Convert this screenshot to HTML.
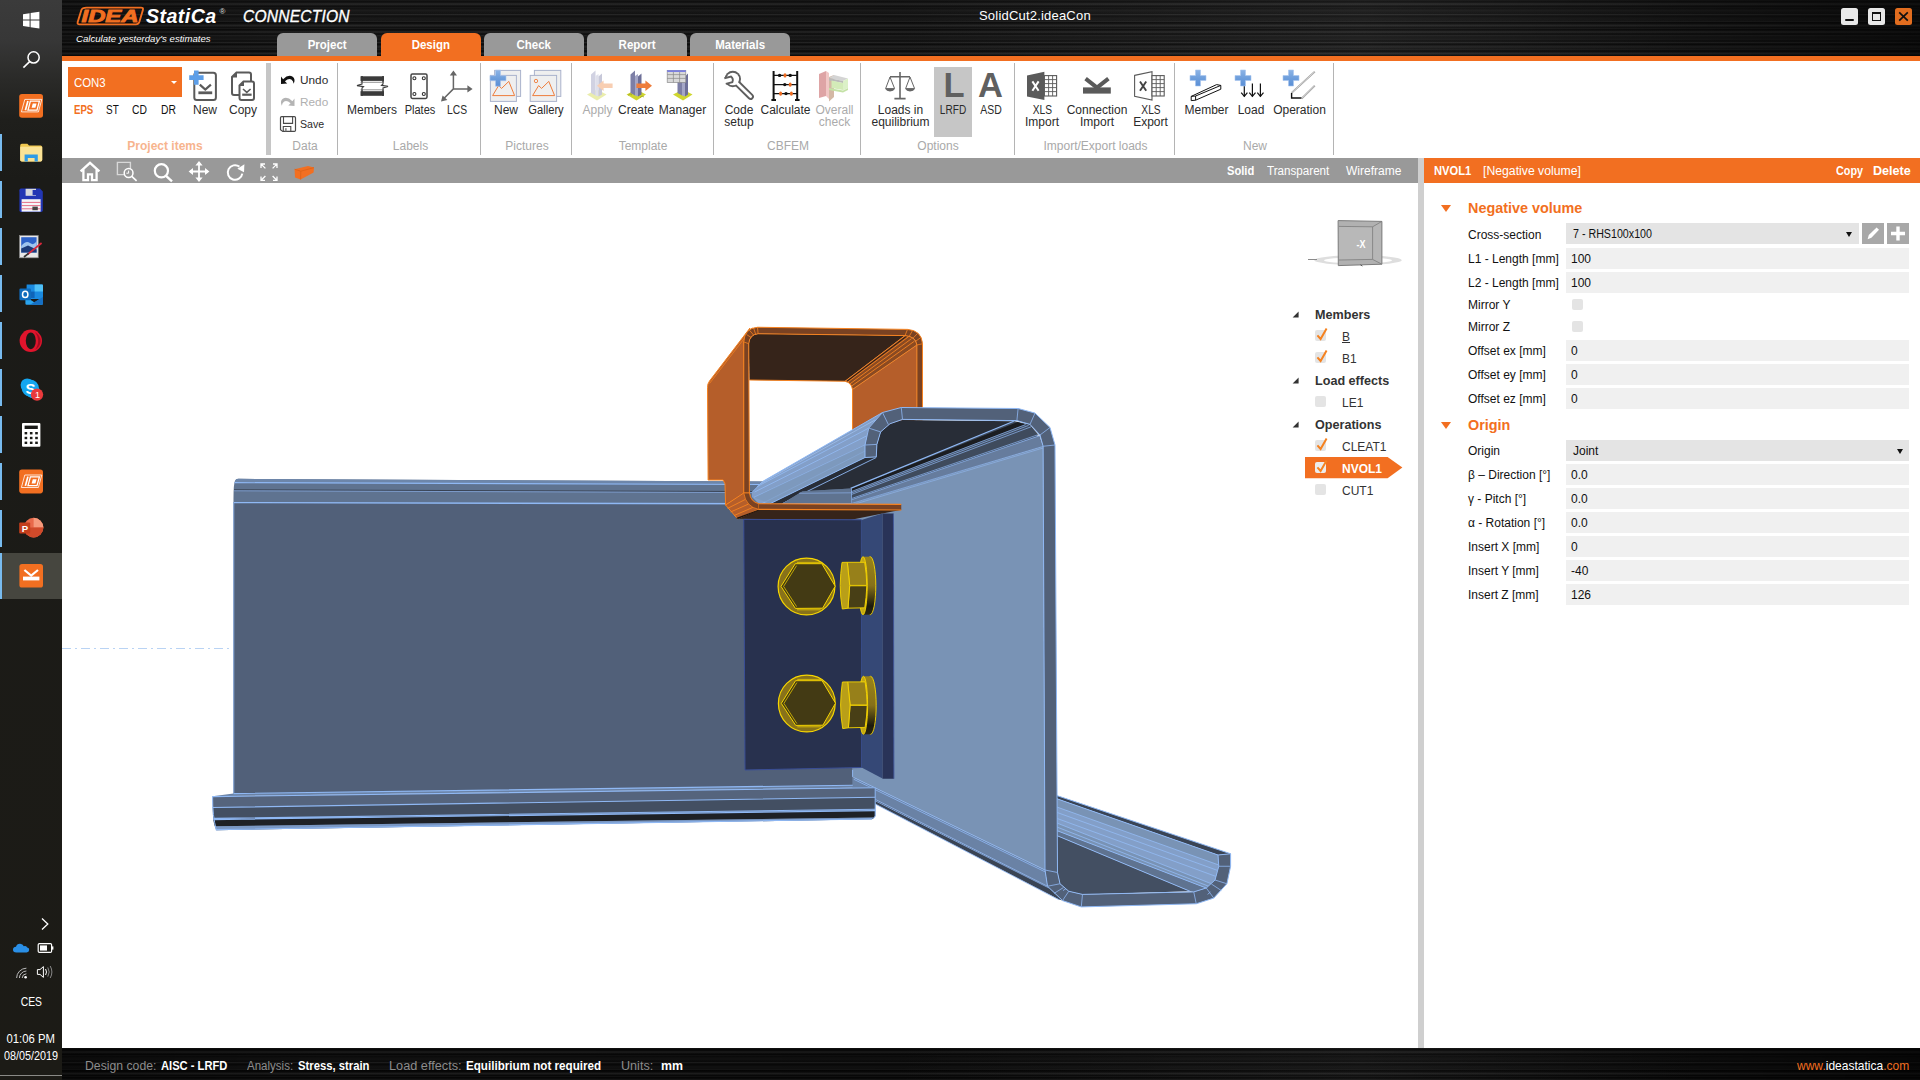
<!DOCTYPE html>
<html lang="en">
<head>
<meta charset="utf-8">
<title>IDEA StatiCa Connection</title>
<style>
*{box-sizing:border-box;margin:0;padding:0}
html,body{width:1920px;height:1080px;overflow:hidden;background:#fff}
body{position:relative;font-family:"Liberation Sans",sans-serif;font-size:12px;color:#222}
.a{position:absolute}
.t{position:absolute;white-space:nowrap;line-height:16px;height:16px;transform-origin:0 50%}
.c{position:absolute;white-space:nowrap;line-height:14px;text-align:center;transform:translateX(-50%)}
.b{font-weight:bold}
.brushed{background-color:#191919;background-image:
 linear-gradient(90deg,rgba(0,0,0,.35),rgba(0,0,0,.1) 15%,rgba(0,0,0,.15) 45%,rgba(255,255,255,.03) 70%,rgba(0,0,0,.3) 88%,rgba(0,0,0,.6)),
 repeating-linear-gradient(180deg,rgba(255,255,255,.07) 0,rgba(255,255,255,0) 1px,rgba(0,0,0,.45) 2px,rgba(0,0,0,0) 3px,rgba(255,255,255,.05) 5px,rgba(0,0,0,.4) 6px,rgba(0,0,0,0) 7px),
 repeating-linear-gradient(180deg,rgba(0,0,0,.4) 0,rgba(0,0,0,0) 2px,rgba(255,255,255,.06) 4px,rgba(0,0,0,0) 5px,rgba(0,0,0,.35) 8px,rgba(255,255,255,.05) 9px,rgba(0,0,0,0) 11px)}
/* taskbar */
#task{left:0;top:0;width:62px;height:1080px;background:linear-gradient(180deg,#3b3b3b 0,#373737 40px,#2a2a28 80px,#1f1f1c 120px,#1b1b18 180px,#1c1b16 100%)}
#task .ind{position:absolute;left:0;width:3px;height:38px;background:#76b9ed}
#task .tx{position:absolute;left:0;width:62px;text-align:center;color:#fff;font-size:12px;line-height:14px}
/* header */
#hdr{left:62px;top:0;width:1858px;height:57px}
#oline{left:62px;top:56px;width:1858px;height:5px;background:#f26f21}
.tab{position:absolute;top:33px;height:23px;width:100px;background:#999;border-radius:6px 6px 0 0;color:#fff;font-weight:bold;font-size:12.5px;line-height:24px;text-align:center}
.tab.on{background:#f26f21;height:24px}
/* ribbon */
#rib{left:62px;top:61px;width:1858px;height:95px;background:#fff}
.sep{position:absolute;top:63px;width:1px;height:92px;background:#b4b4b4}
.rl{position:absolute;white-space:nowrap;line-height:12.4px;text-align:center;transform:translateX(-50%);font-size:12px;color:#2b2b2b;top:104px}
.rl.gl{color:#ababab}
.gr{position:absolute;white-space:nowrap;line-height:14px;text-align:center;transform:translateX(-50%);font-size:12px;color:#a9a9a9;top:139px}
/* view bar */
#vbar{left:62px;top:157.5px;width:1356px;height:25.5px;background:#999}
#ribline{left:62px;top:155px;width:1858px;height:3px;background:#d4d4d4}
#split{left:1418px;top:157.5px;width:6px;height:890.5px;background:#cfcfcf}
#phdr{left:1424px;top:157.5px;width:496px;height:25.5px;background:#f26f21;color:#fff}
/* status */
#status{left:62px;top:1047.5px;width:1858px;height:32.5px;background-color:#0c0c0c}
.fld{position:absolute;left:1566px;width:343px;height:21px;background:#f0f0f0;font-size:12px;line-height:22px;padding-left:5px;color:#111}
.sel{background:#e4e4e4}
.pl{position:absolute;left:1468px;font-size:12px;line-height:16px;color:#111;white-space:nowrap}
.ck{position:absolute;width:11px;height:11px;background:#e4e4e4;border-radius:2px}
.tr{position:absolute;font-size:12px;line-height:16px;color:#333;white-space:nowrap}
</style>
</head>
<body>
<!-- FRAME -->
<div id="hdr" class="a brushed"></div>
<div id="oline" class="a"></div>
<div id="rib" class="a"></div>
<div id="vbar" class="a"></div>
<div id="split" class="a"></div>
<div id="phdr" class="a"></div>
<div id="status" class="a brushed"></div>
<div id="task" class="a"></div>
<!-- HEADER-CONTENT -->
<svg class="a" style="left:72px;top:4px" width="80" height="26" viewBox="72 4 80 26">
 <path d="M86.5 7.6 H141 Q143.6 7.6 142.9 10 L139.3 22 Q138.5 24.4 136 24.4 H79.5 Q77 24.4 77.7 22 L81.4 10 Q82.2 7.6 86.5 7.6 Z" fill="none" stroke="#f26f21" stroke-width="1.9"/>
 <text x="81.5" y="22.4" font-family="Liberation Sans, sans-serif" font-weight="bold" font-style="italic" font-size="17.4" fill="#f26f21" stroke="#f26f21" stroke-width=".9" textLength="57" lengthAdjust="spacingAndGlyphs">IDEA</text>
</svg>
<div class="t b" style="left:146px;top:5px;font-size:19.6px;line-height:22px;height:22px;font-style:italic;color:#fff;letter-spacing:.45px" id="h1">StatiCa</div>
<div class="t" style="left:219.5px;top:7.5px;font-size:8px;line-height:8px;height:8px;color:#ddd">®</div>
<div class="t" style="left:243px;top:7px;font-size:15.6px;line-height:20px;height:20px;font-style:italic;color:#fff;-webkit-text-stroke:.3px #fff;letter-spacing:.2px" id="h2">CONNECTION</div>
<div class="t" style="left:76px;top:32px;font-size:9.6px;line-height:14px;height:14px;font-style:italic;color:#fff" id="h3">Calculate yesterday's estimates</div>
<div class="t" style="left:979px;top:8px;font-size:13px;color:#fff;letter-spacing:.2px" id="h4">SolidCut2.ideaCon</div>
<div class="tab" style="left:277px"><span style="display:inline-block;transform:scaleX(.92)">Project</span></div>
<div class="tab on" style="left:381px"><span style="display:inline-block;transform:scaleX(.92)">Design</span></div>
<div class="tab" style="left:484px"><span style="display:inline-block;transform:scaleX(.92)">Check</span></div>
<div class="tab" style="left:587px"><span style="display:inline-block;transform:scaleX(.92)">Report</span></div>
<div class="tab" style="left:690px"><span style="display:inline-block;transform:scaleX(.92)">Materials</span></div>
<div class="a" style="left:1841px;top:8px;width:17px;height:17px;background:#e8e8e8;border-radius:2.5px"><div class="a" style="left:4.4px;top:11.2px;width:8.4px;height:1.9px;background:#111;border-radius:1px"></div></div>
<div class="a" style="left:1868px;top:8px;width:17px;height:17px;background:#e8e8e8;border-radius:2.5px"><div class="a" style="left:4px;top:4px;width:9px;height:9px;border:1.2px solid #111;border-top-width:2px"></div></div>
<div class="a" style="left:1895px;top:8px;width:17px;height:17px;background:#e26d1f;border-radius:2.5px"><svg class="a" style="left:0;top:0" width="17" height="17"><path d="M4.2 4.4 L12.8 12.6 M12.8 4.4 L4.2 12.6" stroke="#111" stroke-width="1.7"/></svg></div>
<!-- RIBBON-CONTENT -->
<div class="a" style="left:68px;top:67px;width:114px;height:30px;background:#f26f21"></div>
<div class="t" style="left:74px;top:75px;font-size:12px;color:#fff;transform:scaleX(.95)">CON3</div>
<div class="a" style="left:171px;top:81px;width:0;height:0;border:3px solid transparent;border-top:3.5px solid #fff"></div>
<div class="t b" style="left:74px;top:102px;font-size:12px;color:#f26f21;transform:scaleX(.8)">EPS</div>
<div class="t" style="left:106px;top:102px;font-size:12px;color:#111;transform:scaleX(.83)">ST</div>
<div class="t" style="left:132px;top:102px;font-size:12px;color:#111;transform:scaleX(.86)">CD</div>
<div class="t" style="left:161px;top:102px;font-size:12px;color:#111;transform:scaleX(.86)">DR</div>
<div class="rl" style="left:205px">New</div>
<div class="rl" style="left:243px">Copy</div>
<div class="gr b" style="left:165px;color:#f7b48e">Project items</div>
<div class="a" style="left:266px;top:63px;width:5px;height:92px;background:#c6c6c6"></div>
<div class="t" style="left:300px;top:72px;font-size:11.8px;color:#2b2b2b">Undo</div>
<div class="t" style="left:300px;top:94px;font-size:11.8px;color:#b0b0b0">Redo</div>
<div class="t" style="left:300px;top:116px;font-size:11.8px;color:#2b2b2b;transform:scaleX(.9)">Save</div>
<div class="gr" style="left:305px">Data</div>
<div class="sep" style="left:337px"></div>
<div class="rl" style="left:372px">Members</div>
<div class="rl" style="left:419.5px;transform:translateX(-50%) scaleX(0.92)">Plates</div>
<div class="rl" style="left:457px;transform:translateX(-50%) scaleX(0.86)">LCS</div>
<div class="gr" style="left:410.5px">Labels</div>
<div class="sep" style="left:480px"></div>
<div class="rl" style="left:506px">New</div>
<div class="rl" style="left:546px;transform:translateX(-50%) scaleX(0.93)">Gallery</div>
<div class="gr" style="left:527px">Pictures</div>
<div class="sep" style="left:571px"></div>
<div class="rl gl" style="left:597.5px">Apply</div>
<div class="rl" style="left:636px">Create</div>
<div class="rl" style="left:682.5px">Manager</div>
<div class="gr" style="left:643px">Template</div>
<div class="sep" style="left:713px"></div>
<div class="rl" style="left:739px">Code<br>setup</div>
<div class="rl" style="left:785.5px">Calculate</div>
<div class="rl gl" style="left:834.5px">Overall<br>check</div>
<div class="gr" style="left:788px">CBFEM</div>
<div class="sep" style="left:860px"></div>
<div class="rl" style="left:900.5px">Loads in<br>equilibrium</div>
<div class="a" style="left:934px;top:67px;width:38px;height:70px;background:#c6c6c6"></div>
<div class="c b" style="left:954px;top:64.5px;font-size:34.5px;line-height:40px;color:#606060">L</div>
<div class="rl" style="left:953px;transform:translateX(-50%) scaleX(0.84)">LRFD</div>
<div class="c b" style="left:990.5px;top:64.5px;font-size:34.5px;line-height:40px;color:#606060">A</div>
<div class="rl" style="left:991px;transform:translateX(-50%) scaleX(0.87)">ASD</div>
<div class="gr" style="left:938px">Options</div>
<div class="sep" style="left:1014px"></div>
<div class="rl" style="left:1042px"><span style="display:inline-block;transform:scaleX(.85)">XLS</span><br>Import</div>
<div class="rl" style="left:1097px">Connection<br>Import</div>
<div class="rl" style="left:1150.5px"><span style="display:inline-block;transform:scaleX(.85)">XLS</span><br>Export</div>
<div class="gr" style="left:1095.5px">Import/Export loads</div>
<div class="sep" style="left:1174px"></div>
<div class="rl" style="left:1206.5px">Member</div>
<div class="rl" style="left:1251px">Load</div>
<div class="rl" style="left:1299.5px">Operation</div>
<div class="gr" style="left:1255px">New</div>
<div class="sep" style="left:1333px"></div>
<svg class="a" style="left:0;top:0" width="1920" height="160" viewBox="0 0 1920 160" id="ribsvg">
<defs>
 <linearGradient id="plusg" x1="0" y1="0" x2="0" y2="1"><stop offset="0" stop-color="#8db4e6"/><stop offset=".5" stop-color="#6f9fdc"/><stop offset="1" stop-color="#5b8fd6"/></linearGradient>
 <path id="plus" d="M5.5 0 h5 v5.5 h5.5 v5 h-5.5 v5.5 h-5 v-5.5 h-5.5 v-5 h5.5 z" fill="url(#plusg)" stroke="#a9c6ee" stroke-width=".6"/>
</defs>
<!-- New -->
<rect x="194.3" y="72.7" width="21.6" height="27.2" rx="2.5" fill="#fff" stroke="#5a5a5a" stroke-width="2"/>
<path d="M199.8 84.6 L205.3 89.6 L210.9 84.6" fill="none" stroke="#5a5a5a" stroke-width="2.2"/><rect x="198.4" y="91.4" width="13.8" height="2.8" fill="#5a5a5a"/>
<path d="M194 70.5 h4.6 v4.8 h5 v4.6 h-5 v4.9 h-4.6 v-4.9 h-4.8 v-4.6 h4.8 z" fill="#5c9ee8"/>
<!-- Copy -->
<path d="M236.5 72.4 H249 Q251 72.4 251 74.4 V93 Q251 95 249 95 H234 Q232 95 232 93 V77 Z" fill="#fff" stroke="#5a5a5a" stroke-width="2"/>
<path d="M232 77.5 L237 72 V77.5 Z" fill="#5a5a5a"/>
<path d="M243.5 81.4 H252 Q254 81.4 254 83.4 V98 Q254 100 252 100 H241.5 Q239.5 100 239.5 98 V85.5 Z" fill="#fff" stroke="#5a5a5a" stroke-width="2"/>
<path d="M239.5 86 L244 81 V86 Z" fill="#5a5a5a"/>
<path d="M243 89 L246.8 92.4 L250.6 89" fill="none" stroke="#5a5a5a" stroke-width="1.6"/><rect x="242.2" y="93.6" width="9.4" height="2.2" fill="#5a5a5a"/>
<!-- Undo / Redo / Save -->
<path d="M281 76.6 L281 83.9 L287.2 83.5 L284.9 81.3 Q288.6 77.8 291.3 79.4 Q293.3 80.8 293.7 83.8 Q295.8 79 292.7 76.7 Q288.3 74 283.1 79.2 Z" fill="#111"/>
<path d="M294.5 98.6 L294.5 105.9 L288.3 105.5 L290.6 103.3 Q286.9 99.8 284.2 101.4 Q282.2 102.8 281.8 105.8 Q279.7 101 282.8 98.7 Q287.2 96 292.4 101.2 Z" fill="#b4b4b4"/>
<path d="M281.6 116.7 H294.4 Q295.5 116.7 295.5 117.8 V130.3 Q295.5 131.4 294.4 131.4 H282.8 L280.5 129.6 V117.8 Q280.5 116.7 281.6 116.7 Z" fill="#fff" stroke="#4a4a4a" stroke-width="1.2"/><path d="M283.5 116.8 V123.4 H292.6 V116.8" fill="none" stroke="#4a4a4a" stroke-width="1.1"/><path d="M283.3 131.3 V126.5 H290.8 V131.3" fill="none" stroke="#4a4a4a" stroke-width="1.1"/><rect x="285" y="128.2" width="1.7" height="3" fill="#8a8a8a"/>
<!-- Members -->
<rect x="360.5" y="76.3" width="23.5" height="4.6" fill="#3a3a3a"/><rect x="360.5" y="91.2" width="23.5" height="4.6" fill="#3a3a3a"/>
<path d="M362 76 V82.5 M383 76 V82.5 M362 89.5 V96 M383 89.5 V96" stroke="#3a3a3a" stroke-width="1.6"/>
<path d="M362 82 V84 L357 85.6 L363.5 86.6 L362 88 V90 M383 82 V84 L381.5 85.4 L388 86.4 L383 88 V90" fill="none" stroke="#3a3a3a" stroke-width="1.1"/>
<path d="M360.5 82.3 H384 M360.5 89.8 H384" stroke="#777" stroke-width=".8"/>
<!-- Plates -->
<rect x="411" y="74" width="16" height="24.4" rx="1.4" fill="#fff" stroke="#444" stroke-width="1.5"/>
<circle cx="414.4" cy="78.2" r="1.5" fill="#fff" stroke="#333" stroke-width="1.1"/><circle cx="423.8" cy="78.2" r="1.5" fill="#fff" stroke="#333" stroke-width="1.1"/><circle cx="414.4" cy="94" r="1.5" fill="#fff" stroke="#333" stroke-width="1.1"/><circle cx="423.8" cy="94" r="1.5" fill="#fff" stroke="#333" stroke-width="1.1"/>
<!-- LCS -->
<path d="M453.4 74 V88.9 H468 M453.4 88.9 L443.6 98.8" fill="none" stroke="#666" stroke-width="1.5"/>
<path d="M453.4 70.6 L457 75.6 H449.8 Z M472.6 88.9 L467.4 85.2 V92.6 Z M441 101.4 L442.6 95.4 L447.4 100 Z" fill="#666"/>
<!-- New picture -->
<rect x="494.6" y="70.4" width="26" height="26" fill="#efefef" stroke="#aab3cc"/><rect x="490.4" y="75.4" width="26" height="26" fill="#efefef" stroke="#aab3cc"/>
<path d="M492.6 95.6 L498.6 85.6 L501.6 88.4 L508.8 81.4 L514.6 95.6 Z" fill="none" stroke="#ee7d3c" stroke-width="1"/>
<use href="#plus" x="490" y="70.2"/>
<!-- Gallery -->
<rect x="534.4" y="70.4" width="26.4" height="26" fill="#efefef" stroke="#aab3cc"/><rect x="530.2" y="75.4" width="26.4" height="26" fill="#efefef" stroke="#aab3cc"/>
<path d="M532.6 95.6 L538.6 85.6 L541.6 88.4 L548.8 81.4 L554.6 95.6 Z" fill="none" stroke="#ee7d3c" stroke-width="1"/><circle cx="536" cy="81" r="1.7" fill="none" stroke="#ee7d3c" stroke-width=".9"/>
<!-- Apply (faded) -->
<g opacity=".45">
<path d="M587 94.6 L597 89.5 L606.5 94.6 L597 100.6 Z" fill="#d2d84a"/>
<path d="M591 74.5 L595.5 70.5 V95.5 L591 93 Z" fill="#9a9cc0"/><path d="M595.5 76 L598.5 74 V96.5 L595.5 95.5 Z" fill="#b7b9d4"/><path d="M598.5 76.5 L602 73.5 V94.6 L598.5 96.5 Z" fill="#8587ad"/>
<path d="M597 85.8 L603.6 80.6 V83.6 H612.6 V88 H603.6 V91 Z" fill="#f09457"/>
</g>
<!-- Create -->
<path d="M626.5 94.6 L636.5 89.5 L646 94.6 L636.5 100.6 Z" fill="#cfd62f"/><path d="M628 95.4 L630 93.8 L632 95 M640 97.6 L642 96 L644 97" stroke="#9da21d" fill="none" stroke-width=".8"/>
<path d="M630.5 74.5 L635 70.5 V95.5 L630.5 93 Z" fill="#7d7fa6"/><path d="M635 76 L638 74 V96.5 L635 95.5 Z" fill="#a4a6c6"/><path d="M638 76.5 L641.5 73.5 V94.6 L638 96.5 Z" fill="#6d6f98"/>
<path d="M652 85.8 L645.4 80.6 V83.6 H636.4 V88 H645.4 V91 Z" fill="#ee7d3c"/>
<!-- Manager -->
<path d="M673 94.6 L683 89.5 L692.5 94.6 L683 100.6 Z" fill="#cfd62f"/>
<path d="M677.5 82 L682 78 V95.5 L677.5 93 Z" fill="#7d7fa6"/><path d="M682 80 L685 78 V96.5 L682 95.5 Z" fill="#a4a6c6"/><path d="M685 76.5 L688 73.5 V94.6 L685 96.5 Z" fill="#6d6f98"/>
<rect x="667.2" y="70.4" width="18.6" height="12" fill="#d9d9d9" stroke="#8a8a8a" stroke-width=".7"/><rect x="667.2" y="70.2" width="18.6" height="1.8" fill="#7b7fe0"/>
<path d="M667.2 74.6 H685.8 M667.2 78.4 H685.8 M673.4 72 V82.4 M679.6 72 V82.4" stroke="#8a8a8a" stroke-width=".7"/>
<!-- Code setup (wrench) -->
<line x1="734" y1="80.2" x2="750.6" y2="96.6" stroke="#5f5f5f" stroke-width="6.6" stroke-linecap="round"/>
<circle cx="732.8" cy="79" r="8.2" fill="#5f5f5f"/>
<line x1="734" y1="80.2" x2="750.6" y2="96.6" stroke="#fff" stroke-width="2.8" stroke-linecap="round"/>
<circle cx="732.8" cy="79" r="6.3" fill="#fff"/>
<g transform="rotate(-14 732.8 79)"><rect x="722" y="76.2" width="10.6" height="5.8" fill="#fff"/><path d="M724.8 76.2 H731.6 Q733.8 79.1 731.6 82 H724.8" stroke="#5f5f5f" stroke-width="1.9" fill="none"/></g>
<!-- Calculate (abacus) -->
<path d="M773.6 71 V100 M797.2 71 V100 M771.4 100 H776 M795 100 H799.6" stroke="#111" stroke-width="2"/>
<path d="M773.6 75.4 H797.2 M773.6 84.6 H797.2 M773.6 93.6 H797.2" stroke="#111" stroke-width="1.2"/>
<circle cx="779.6" cy="75.4" r="1.7" fill="#111"/><ellipse cx="785" cy="75.4" rx="1.5" ry="2.2" fill="#ee6a1f"/><circle cx="790.2" cy="75.4" r="1.7" fill="#111"/>
<circle cx="784.8" cy="84.6" r="1.7" fill="#111"/><ellipse cx="790.2" cy="84.6" rx="1.5" ry="2.2" fill="#ee6a1f"/>
<ellipse cx="780.6" cy="93.6" rx="1.5" ry="2.2" fill="#ee6a1f"/><circle cx="786" cy="93.6" r="1.7" fill="#111"/><ellipse cx="791.4" cy="93.6" rx="1.5" ry="2.2" fill="#ee6a1f"/>
<!-- Overall check (faded) -->
<g opacity=".6">
<path d="M819 74 L826 71 V96 L819 98 Z" fill="#c9696b"/><path d="M826 71 L829 73 V99 L826 96 Z" fill="#e8a3a0"/><path d="M829 77 L834 75 V97 L829 101.6 Z" fill="#b88a6a"/>
<path d="M829 78 L834 75 L848 78.5 L843 81 Z" fill="#b9b9b9"/><path d="M829 78 L843 81 V83 L829 80.4 Z" fill="#8d8d8d"/>
<path d="M831.5 80.6 L843 83 V90 L831.5 88 Z" fill="#b6de8a"/><path d="M829 88 L843 90.6 L848 88 V90 L843 92.6 L829 90 Z" fill="#9ed06c"/><path d="M843 81 L848 78.5 V88 L843 90.6 Z" fill="#c6e8a4"/>
</g>
<!-- Scales -->
<path d="M900 72 V98 M890 76.8 H910 M894.4 98.6 H905.6" stroke="#666" stroke-width="1.6" fill="none"/>
<path d="M890 77 L885.6 88.6 H894.6 Z M910 77 L905.6 88.6 H914.6 Z" fill="none" stroke="#666" stroke-width="1"/>
<path d="M885.2 88.8 H895 Q893.6 91.4 890 91.4 Q886.6 91.4 885.2 88.8 Z M905.2 88.8 H915 Q913.6 91.4 910 91.4 Q906.6 91.4 905.2 88.8 Z" fill="#666"/>
<!-- XLS Import -->
<path d="M1027 75.4 L1044.4 71.8 V100 L1027 96.4 Z" fill="#5a5a5a"/>
<rect x="1044.4" y="75.6" width="12.2" height="20.4" fill="#fff" stroke="#5a5a5a" stroke-width="1.1"/>
<path d="M1044.4 79.6 H1056.6 M1044.4 83.6 H1056.6 M1044.4 87.6 H1056.6 M1044.4 91.6 H1056.6 M1048.6 75.6 V96 M1052.6 75.6 V96" stroke="#5a5a5a" stroke-width=".9"/>
<path d="M1032.4 81.4 L1038.6 90.8 M1038.6 81.4 L1032.4 90.8" stroke="#fff" stroke-width="2"/>
<!-- Connection import -->
<path d="M1085.6 78.6 L1097 87.6 L1108.4 78.6" fill="none" stroke="#5a5a5a" stroke-width="4"/><rect x="1083" y="87.4" width="27.8" height="6.2" fill="#5a5a5a"/>
<!-- XLS Export -->
<path d="M1134.6 75.4 L1152 71.8 V100 L1134.6 96.4 Z" fill="#fff" stroke="#5a5a5a" stroke-width="1.1"/>
<rect x="1152" y="75.6" width="12.2" height="20.4" fill="#fff" stroke="#5a5a5a" stroke-width="1.1"/>
<path d="M1152 79.6 H1164.2 M1152 83.6 H1164.2 M1152 87.6 H1164.2 M1152 91.6 H1164.2 M1156.2 75.6 V96 M1160.2 75.6 V96" stroke="#5a5a5a" stroke-width=".9"/>
<path d="M1140 81.4 L1146.2 90.8 M1146.2 81.4 L1140 90.8" stroke="#444" stroke-width="1.9"/>
<!-- Member -->
<path d="M1191.2 96.4 L1195.6 96 V100.2 L1191.2 100.6 Z M1191.2 96.4 L1216.6 84.6 L1220.8 85.4 L1195.6 96 M1220.8 85.4 V89.2 L1195.6 100.2" fill="#fff" stroke="#111" stroke-width="1"/>
<use href="#plus" x="1190" y="70"/>
<!-- Load -->
<path d="M1244.3 84 V96.4 M1252.4 83.6 V96.4 M1260.4 83.6 V96.4" stroke="#111" stroke-width="1.2"/>
<path d="M1241.2 92.6 L1244.3 96.4 L1247.4 92.6 M1249.3 92.6 L1252.4 96.4 L1255.5 92.6 M1257.3 92.6 L1260.4 96.4 L1263.5 92.6" fill="none" stroke="#111" stroke-width="1.2"/>
<use href="#plus" x="1235" y="70"/>
<!-- Operation -->
<path d="M1291.6 92.8 L1314.8 71.6 M1301.6 98.6 L1314.8 85.6" stroke="#9a9a9a" stroke-width="1.8"/><path d="M1291.6 92.8 L1314.8 71.6 M1301.6 98.6 L1314.8 85.6" stroke="#fff" stroke-width=".6"/>
<path d="M1291.6 93 V98 H1301.4" fill="none" stroke="#111" stroke-width="1.4"/>
<use href="#plus" x="1283" y="70"/>
</svg>
<!-- VIEWBAR-CONTENT -->
<svg class="a" style="left:0;top:150px" width="1920" height="40" viewBox="0 150 1920 40">
<g fill="none" stroke="#fff" stroke-width="2">
<path d="M80.6 171.4 L90 162.8 L99.4 171.4 M83.4 169.6 V180.2 H88 V174.4 H92 V180.2 H96.6 V169.6" stroke-linejoin="miter" stroke-width="2.3"/>
<path d="M117.4 162.4 H130.4 V174.6 H117.4 Z" stroke="#d8d8d8" stroke-width="1.4"/>
<circle cx="128.6" cy="173" r="4.4" fill="#999" stroke-width="1.5"/><path d="M131.8 176.4 L136.6 180.8" stroke-width="1.6"/><path d="M128.6 170.6 V173.2 H126.4" stroke-width="1"/>
<circle cx="161.4" cy="170.8" r="6.6" stroke-width="2.2"/><path d="M166 175.8 L172 181.4" stroke-width="2.4"/>
<path d="M199 162.6 V180.4 M190 171.5 H208" stroke-width="1.8"/>
<path d="M239.4 166.6 A7.3 7.3 0 1 0 242.3 173.6" stroke-width="2"/>
<path d="M261 168 V164 H265 M273 164 H277 V168 M277 176.4 V180.4 H273 M265 180.4 H261 V176.4 M261.4 164.4 L265.4 168.4 M276.6 164.4 L272.6 168.4 M276.6 180 L272.6 176 M261.4 180 L265.4 176" stroke-width="1.3"/>
</g>
<path d="M199 161 L202.6 165.4 H195.4 Z M199 182 L202.6 177.6 H195.4 Z M188.6 171.5 L193 167.9 V175.1 Z M209.4 171.5 L205 167.9 V175.1 Z" fill="#fff"/>
<path d="M244.4 164.2 L244 172.2 L237.4 168.8 Z" fill="#fff"/>
<path d="M294.6 169.2 L308 166 L314 167.6 L313.6 172.4 L300.6 179.6 L295 177.6 Z" fill="#f26f21"/>
<path d="M294.6 169.2 L300.8 171.2 L314 167.6 M300.8 171.2 L300.6 179.6" fill="none" stroke="#d85e15" stroke-width=".7"/>
</svg>
<div class="t b" style="left:1227px;top:162.5px;font-size:12px;color:#fff;transform:scaleX(.93)">Solid</div>
<div class="t" style="left:1267px;top:162.5px;font-size:12px;color:#fff;transform:scaleX(.97)">Transparent</div>
<div class="t" style="left:1346px;top:162.5px;font-size:12px;color:#fff;transform:scaleX(1.0)">Wireframe</div>
<div class="t b" style="left:1434px;top:162.5px;font-size:12px;color:#fff;transform:scaleX(.93)">NVOL1</div>
<div class="t" style="left:1483px;top:162.5px;font-size:12px;color:#fff;transform:scaleX(1.02)">[Negative volume]</div>
<div class="t b" style="left:1836px;top:162.5px;font-size:12px;color:#fff;transform:scaleX(.9)">Copy</div>
<div class="t b" style="left:1873px;top:162.5px;font-size:12px;color:#fff;transform:scaleX(1.05)">Delete</div>
<!-- MODEL -->
<svg class="a" style="left:62px;top:183px" width="1356" height="864" viewBox="62 183 1356 864" id="model">
<defs>
 <linearGradient id="wash" x1="0" y1="0" x2="0" y2="1"><stop offset="0" stop-color="#9a8418"/><stop offset=".5" stop-color="#85701a"/><stop offset=".85" stop-color="#1c1a0c"/><stop offset="1" stop-color="#2a2610"/></linearGradient>
 <g id="bolt">
  <circle cx="806.5" cy="586.5" r="28.4" fill="#88721a" stroke="#f7d600" stroke-width="1.2"/>
  <path d="M781 586.4 L795.3 563.7 L821.8 563.7 L835.2 586.2 L822.6 608.2 L795.4 608.4 Z" fill="#433a14" stroke="#f7d600" stroke-width="1" stroke-linejoin="round"/>
  <path d="M783.6 586.4 L796.6 565.6 M783.6 586.4 L796.6 606.6 M797 562.4 H820.6 M797 609.8 H820.6" fill="none" stroke="#f7d600" stroke-width=".7"/>
 </g>
 <g id="nut">
  <ellipse cx="870.2" cy="585.7" rx="5.6" ry="29" fill="url(#wash)" stroke="#f7d600" stroke-width=".9"/>
  <path d="M863 556.7 L870.2 556.7 L870.2 614.7 L863 614.7 Z" fill="url(#wash)"/>
  <ellipse cx="863" cy="585.7" rx="4.2" ry="29" fill="#c2a716" stroke="#f7d600" stroke-width=".9"/>
  <path d="M847.3 562.3 L864.7 562.3 Q866.6 574 866.8 585.4 L849.7 585.4 Z" fill="#97801a" stroke="#f7d600" stroke-width=".9"/>
  <path d="M849.7 585.8 L866.8 585.8 Q866.4 598 864.7 607.8 L848 608.2 Z" fill="#483f16" stroke="#f7d600" stroke-width=".9"/>
  <path d="M842 562.4 L847.3 562.3 L849.7 585.4 L848 608.2 L842.3 609 Q840.2 597 840.2 585.4 Q840.4 573 842 562.4 Z" fill="#b99f18" stroke="#f7d600" stroke-width=".9"/>
 </g>
</defs>
<!-- axis dash-dot -->
<path d="M62 648.5 H231" stroke="#b9d3f4" stroke-width="1" stroke-dasharray="9 4 2 4"/>
<!-- ===== Beam B (left member) ===== -->
<g id="beamB">
 <path d="M233.5 502 L852.4 503.5 L853 786 L233.5 795 Z" fill="#516079"/>
 <path d="M233.5 503 Q233.3 484 235 481 Q236 478.8 238.5 478.8 L724 481.2 L852 482 L852 503.8 L233.5 502.8 Z" fill="#5f7390"/>
 <path d="M235.4 480 Q236 478.8 238.5 478.8 L852 482 L852 484.6 L234.6 482.4 Z" fill="#6d86aa"/>
 <path d="M234.6 482.6 L852 484.9" stroke="#8fb8f4" stroke-width="1.1" fill="none"/>
 <path d="M234 489.8 L852 491.9" stroke="#2e3644" stroke-width=".8" fill="none"/>
 <path d="M234 490.8 L852 492.9" stroke="#84a6da" stroke-width=".8" fill="none"/>
 <path d="M233.5 502.6 L852 503.9" stroke="#8fb8f4" stroke-width="1.4" fill="none"/>
 <path d="M233.8 503 V795" stroke="#7fa3d8" stroke-width="1" fill="none"/>
</g>
<!-- ===== Orange RHS back parts ===== -->
<g id="rhsBack" stroke-linejoin="round">
 <path d="M750 328 L743.75 341.9 L743.75 494 L725.6 505 L725 483.75 L723.1 480 L708.1 480 L707.5 387.5 Q707.3 384 709.5 381 Z" fill="#b55e2a" stroke="#f58220" stroke-width="1"/>
 <path d="M752.6 327.6 L709.6 383.4" stroke="#f58220" stroke-width=".8" fill="none"/>
 <path d="M758 333.75 L905 335.6 L845 381.25 L749.4 380 L748.75 343.75 Q749.6 334.6 758 333.75 Z" fill="#36241a"/>
 <path d="M916.9 345 L852.5 389.4 L852.5 440 L916.9 420 Z" fill="#b55e2a"/>
 <path d="M905 335.6 L845 381.25 Q851.6 382.6 852.5 389.4 L916.9 345 Q915.6 337 905 335.6 Z" fill="#8a4a22"/>
 <path d="M905 335.6 L845 381.25 M908.6 336.6 L847.6 382.2 M911.6 338.6 L849.8 384 M914.4 341.2 L851.4 386.2 M916.9 345 L852.5 389.4" stroke="#f58220" stroke-width=".9" fill="none"/>
 <path d="M906.8 336 L846.4 381.7" stroke="#1e1410" stroke-width=".9" fill="none"/>
 <path d="M749.4 380 L845 381.25 Q851.6 382.6 852.5 389.4 V440" stroke="#f58220" stroke-width="1" fill="none"/>
 <path d="M743.75 341.9 Q744.4 328.4 757.5 327.25 L907.5 329.4 Q921.6 330.4 922.5 343.75 L922.5 420 L916.9 420 L916.9 345 Q915.8 336.4 905 335.6 L758.1 333.75 Q749.5 334.5 748.75 343.75 L749.4 494 L743.75 494 Z" fill="#7a4222" stroke="#f58220" stroke-width="1"/>
 <path d="M746.6 334.6 L751.4 337.6 M749.6 330.4 L753.6 335 M753.6 328 L755.6 334 M757.5 327.25 L758.1 333.75 M743.75 341.9 L748.75 343.75 M907.5 329.4 L905 335.6 M912.6 330.4 L909.2 336.4 M917.6 333.4 L912.8 338.4 M920.8 337.6 L915.4 341.4 M922.5 343.75 L916.9 345" stroke="#f58220" stroke-width=".8" fill="none"/>
</g>
<!-- ===== Right member (Z section) ===== -->
<g id="memR" stroke-linejoin="round">
 <!-- far bottom flange / lip -->
 <path d="M1056.9 795.6 L1230.6 853.75 L1218 855 L1056.9 798.75 Z" fill="#3a4454"/>
 <path d="M1056.9 798.75 L1218 855 L1218.75 866.25 L1215 880 L1206.25 888 L1056.9 830.6 Z" fill="#839fc8"/>
 <path d="M1056.9 798.75 L1218 855 L1218.75 865 L1056.9 807 Z" fill="#7993b5"/>
 <path d="M1056.9 823 L1212 884 L1206.25 888 L1056.9 830.6 Z" fill="#7993b5"/>
 <path d="M1056.9 807 L1218.75 865 M1056.9 812.4 L1218 870.6 M1056.9 818.4 L1216.4 876.6 M1056.9 823 L1212 884 M1056.9 827 L1209 886.4" stroke="#93bbf5" stroke-width=".8" fill="none"/>
 <path d="M1056.9 830.6 L1206.25 888 L1193.75 891.9 L1190 891.25 L1056.9 835.6 Z" fill="#5f7390"/>
 <path d="M1056.9 835.6 L1190 891.25 L1082.5 894.4 L1068.75 891.25 L1060 883.75 L1057.5 872.5 Z" fill="#434f62"/>
 <path d="M1056.9 798.75 L1218 855 M1056.9 830.6 L1206.25 888 M1056.9 835.6 L1190 891.25 M1056.9 795.6 L1230.6 853.75" stroke="#8fb8f4" stroke-width="1" fill="none"/>
 <!-- web -->
 <path d="M851.6 503 L1043.1 446.25 L1045 870 L853.75 777.5 L852.2 776.6 Z" fill="#7993b5"/>
 <path d="M852.6 770 V777" stroke="#8fb8f4" stroke-width=".9" fill="none"/>
 <path d="M852.4 776.8 L1045 870 L1047.5 886.25 L852.4 788 Z" fill="#6a82a5"/>
 <path d="M852.4 788 L1047.5 886.25 L1062.5 900.6 L1059 899.6 L852.4 792 Z" fill="#3a4454"/>
 <path d="M853.75 777.5 L1045 870 M853.75 779.3 L1045 871.8 M853.75 788.6 L1047.5 886.25 M853.75 790 L1049 888 M853.75 792.8 L1059 899.8" stroke="#8fb8f4" stroke-width=".8" fill="none"/>
 <!-- top flange chamfer bands -->
 <path d="M850.6 488 L1013.75 421 L1030 424.4 L1043.1 446.25 L851.9 503.4 Z" fill="#3f4b5d"/>
 <path d="M851.9 499.4 L1039.4 435.6 L1043.1 446.25 L851.9 503.4 Z" fill="#667c9d"/>
 <path d="M851.25 491.9 L1030 425 L1038.75 435 L851.9 498.75 Z" fill="#3f4b5d"/>
 <path d="M851.25 488.6 L1017.5 421.9 L1025 424.4 L851.25 491.4 Z" fill="#1b1d21"/>
 <path d="M851.25 491.6 L1025.6 424.6 M851.4 493 L1028.6 425.4 M851.6 494.4 L1031 426.8 M851.9 498.4 L1038.4 434.6 M851.9 499.6 L1039.4 435.8 M851.9 503.4 L1043.1 446.4" stroke="#8fb8f4" stroke-width=".7" fill="none"/>
 <path d="M851.9 505 L1043.1 448" stroke="#93bbf5" stroke-width=".7" fill="none" opacity=".8"/>
 <path d="M851.4 488.4 V503.4" stroke="#8fb8f4" stroke-width=".9" fill="none"/>
 <!-- dark underside of top flange -->
 <path d="M902.5 420 L1013.75 421.25 L850.6 488.4 L802.5 491.25 L782.5 503.5 L769 504 L865 457.3 L876.25 456.9 L876.9 444.4 L880.6 431.9 L890 423.75 Z" fill="#282d37"/>
 <path d="M1013.75 421.25 L850.6 488.4" stroke="#8fb8f4" stroke-width="1.2" fill="none"/>
 <path d="M876.25 457.5 L782.5 503.5" stroke="#8fb8f4" stroke-width=".9" fill="none"/>
 <!-- lip outer surface -->
 <path d="M882.5 412.5 L763 481.25 L751.9 492.5 L752 497 L758.75 503.75 L770 503.75 L865 457.5 L865 445 L868.75 428.1 Z" fill="#839fc8"/>
 <path d="M868.75 428.1 L757 486.6 M865 445 L754 497.4 M866.4 436 L754.6 492 M865 451 L762 503.6" stroke="#93bbf5" stroke-width=".8" fill="none"/>
 <path d="M875 420 L760 483.8" stroke="#a8c9f8" stroke-width=".6" fill="none"/>
 <path d="M865 445 L865 457.5 L770 503.75 L754 497.4 Z" fill="#7993b5" opacity=".55"/>
 <path d="M882.5 412.5 L763 481.25 L751.9 492.5 M865 457.5 L770 503.75" stroke="#8fb8f4" stroke-width="1" fill="none"/>
 <!-- end face (Z cross-section) -->
 <path d="M876.25 456.9 L876.9 444.4 L880.6 431.9 L890 423.75 L902.5 419.4 L1016.9 420.6 L1030 424.4 L1040 435 L1043.1 446.25 L1045 870 L1047.5 886.25 L1062.5 900.6 L1081.25 906.9 L1196.25 903.75 L1213.75 898.1 L1226.9 883.75 L1230.6 866.25 L1230.6 853.75 L1218 855 L1218.75 866.25 L1215 880 L1206.25 888 L1193.75 891.9 L1082.5 894.4 L1068.75 891.25 L1060 883.75 L1057.5 872.5 L1055 445 L1050 427.5 L1035 413.1 L1018.1 408.5 L901.25 407.5 L882.5 412.5 L868.75 428.1 L865 445 L865 457.5 Z" fill="#526179" stroke="#8fb8f4" stroke-width="1"/>
 <path d="M865 445 L876.9 444.4 M868.75 428.1 L880.6 431.9 M882.5 412.5 L888.4 424.6 M901.25 407.5 L902.5 419.4 M1018.1 408.5 L1016.9 420.6 M1035 413.1 L1030 424.4 M1050 427.5 L1040 435 M1055 445 L1043.1 446.25 M1045 870 L1057.5 872.5 M1047.5 886.25 L1060 883.75 M1054 893.4 L1063.4 887.6 M1062.5 900.6 L1068.75 891.25 M1066 888.6 L1063 890.6 M1081.25 906.9 L1082.5 894.4 M1196.25 903.75 L1193.75 891.9 M1213.75 898.1 L1206.25 888 M1210.4 892 L1207.6 894.4 M1221.4 890.6 L1211.4 884 M1226.9 883.75 L1215 880 M1230.6 866.25 L1218.75 866.25" stroke="#8fb8f4" stroke-width=".8" fill="none"/>
</g>
<!-- beam B top band piece visible under right member's flange -->
<path d="M782.5 503.6 L802.5 491.25 L850.8 488.6 L851.4 503.8 Z" fill="#5f7390"/>
<path d="M799 493.3 L851 492.8" stroke="#84a6da" stroke-width=".8" fill="none"/>
<path d="M782.5 503.8 L851.6 503.8" stroke="#8fb8f4" stroke-width="1.2" fill="none"/>
<!-- ===== Beam B bottom flange ===== -->
<g id="beamBfl">
 <path d="M212.6 796.3 L875.2 787.4 L875.2 816 L873.4 818.6 L872 819.3 L216.4 830.2 Q213 824 212.8 812 Z" fill="#55647d"/>
 <path d="M233.5 793.6 L852.8 785.2 L875.2 787.4 L212.6 796.3 Z" fill="#6a82a5"/>
 <path d="M212.8 807.5 L875.2 797.3 L875.2 809.3 L213.4 818.75 Z" fill="#434f62"/>
 <path d="M213.4 819.5 L875.2 810.6 L875.2 816.3 L873.4 817.6 L215 826.2 Z" fill="#1e2126"/>
 <path d="M215 826.2 L873.4 817.6 L872 819.3 L216.4 830.2 Z" fill="#7a98c4"/>
 <path d="M233.5 793.6 L852.8 785.2 M212.6 796.6 L875.2 787.7 M212.8 807.5 L875.2 797.3 M213.4 818.4 L875.2 809.2 M213.4 819.6 L875.2 810.6 M215.8 829.6 L872 819" stroke="#8fb8f4" stroke-width="1.1" fill="none"/>
 <path d="M212.6 796.3 Q212.4 816 216.4 830.2 M875.2 787.4 L875.2 816 L873.4 818.6" stroke="#8fb8f4" stroke-width="1" fill="none"/>
</g>
<!-- ===== Orange RHS front parts ===== -->
<g id="rhsFront" stroke-linejoin="round">
 <path d="M758.75 509.4 L901.25 510 L893.75 511.25 L852.5 519.4 L738 518.75 Z" fill="#36241a"/>
 <path d="M743.75 493 L749.4 493 Q750.4 501.6 758.75 503.75 L758.75 509.4 L737.5 518.75 L725.6 505 Z" fill="#b55e2a" stroke="#f58220" stroke-width="1"/>
 <path d="M749.4 493 Q750.4 501.6 758.75 503.75 L758.75 509.4 Q746 507 743.75 493 Z" fill="#7a4222" stroke="#f58220" stroke-width=".8"/>
 <path d="M745.4 499.4 L727.6 508.4 M748.6 504 L730.6 512 M752.8 507.4 L734 515.6" stroke="#f58220" stroke-width=".9" fill="none"/>
 <path d="M757.6 510 L736 518 L738 518.9 L758.75 510.4 Z" fill="#1e1410"/>
 <path d="M758.75 503.75 L901.25 504.4 L901.25 510 L758.75 509.4 Z" fill="#7a4222"/>
 <path d="M758.75 503.75 L901.25 504.4 M758.75 509.4 L901.25 510" stroke="#f58220" stroke-width="1.2" fill="none"/>
</g>
<!-- ===== Cleat ===== -->
<g id="cleat">
 <path d="M743.75 519.4 L861.4 519.8 L861.6 767.5 L745 770 Z" fill="#28314e" stroke="#3a4e96" stroke-width="1"/>
 <path d="M861.4 520 L882.5 513.4 L882.5 778.4 L861.6 767.5 Z" fill="#354876"/>
 <path d="M882.5 513.4 L893.2 513.4 L893.75 778.75 L882.5 778.75 Z" fill="#293358"/>
 <path d="M893.4 513.4 L893.9 778.75" stroke="#3a4e96" stroke-width=".8"/>
</g>
<use href="#bolt"/><use href="#bolt" x=".3" y="117"/>
<use href="#nut"/><use href="#nut" x=".4" y="119.6"/>
</svg>
<!-- TREE -->
<svg class="a" style="left:1290px;top:210px" width="130" height="290" viewBox="1290 210 130 290">
<ellipse cx="1358" cy="260.2" rx="43.8" ry="5" fill="#dedede"/><ellipse cx="1358" cy="260.4" rx="34" ry="2.9" fill="#fff"/>
<path d="M1308 259.5 H1317" stroke="#8a8a8a" stroke-width="1"/>
<path d="M1338.1 220.6 L1381.9 221.4 L1381.9 264.2 L1338.3 265.6 Z" fill="#b1b1b1"/>
<path d="M1372.6 226.8 L1381.9 221.4 L1381.9 264.2 L1372.6 259.4 Z" fill="#b6b6b6"/>
<path d="M1338.9 226.4 L1372.6 226.8 L1372.6 259.4 L1338.9 260 Z" fill="#b8b8b8"/>
<path d="M1338.9 226.4 L1372.6 226.8 L1372.6 259.4 L1338.9 260 M1372.6 226.8 L1381.9 221.4 M1372.6 259.4 L1381.9 264.2" fill="none" stroke="#7c7c7c" stroke-width=".8"/>
<path d="M1338.1 220.6 L1381.9 221.4 L1381.9 264.2 L1338.3 265.6 Z" fill="none" stroke="#7c7c7c" stroke-width="1"/>
<path d="M1360.4 264.8 L1362.4 266" stroke="#555" stroke-width="1"/>
<text x="1356.4" y="247.9" font-family="Liberation Sans, sans-serif" font-weight="bold" font-size="10.6" fill="#fff" textLength="9" lengthAdjust="spacingAndGlyphs">-X</text>
<path d="M1298.6 311.4 V317.4 H1292.6 Z M1298.6 377.4 V383.4 H1292.6 Z M1298.6 421.4 V427.4 H1292.6 Z" fill="#333"/>
<path d="M1305 457 H1387.6 L1402.4 467.6 L1387.6 478.2 H1305 Z" fill="#f26f21"/>
</svg>
<div class="tr b" style="left:1315px;top:306.5px;font-size:12.6px">Members</div>
<div class="ck" style="left:1315px;top:330px"></div><div class="tr" style="left:1342px;top:328.5px;text-decoration:underline">B</div>
<div class="ck" style="left:1315px;top:352px"></div><div class="tr" style="left:1342px;top:350.5px">B1</div>
<div class="tr b" style="left:1315px;top:372.5px;font-size:12.6px">Load effects</div>
<div class="ck" style="left:1315px;top:396px"></div><div class="tr" style="left:1342px;top:394.5px">LE1</div>
<div class="tr b" style="left:1315px;top:416.5px;font-size:12.6px">Operations</div>
<div class="ck" style="left:1315px;top:440px"></div><div class="tr" style="left:1342px;top:438.5px">CLEAT1</div>
<div class="ck" style="left:1315px;top:462px;background:#ececec"></div><div class="tr b" style="left:1342px;top:460.5px;color:#fff">NVOL1</div>
<div class="ck" style="left:1315px;top:484px"></div><div class="tr" style="left:1342px;top:482.5px">CUT1</div>
<svg class="a" style="left:1310px;top:325px" width="24" height="150" viewBox="1310 325 24 150">
<g fill="none" stroke="#f58220" stroke-width="2">
<path d="M1317.4 335.4 L1320.6 339 L1326.6 328.6"/><path d="M1317.4 357.4 L1320.6 361 L1326.6 350.6"/><path d="M1317.4 445.4 L1320.6 449 L1326.6 438.6"/><path d="M1317.4 467.4 L1320.6 471 L1326.6 460.6"/>
</g></svg>
<!-- PROPS -->
<div class="a" style="left:1441px;top:205px;width:0;height:0;border:5px solid transparent;border-top:7px solid #f26f21"></div>
<div class="t b" style="left:1468px;top:199px;font-size:14.4px;line-height:18px;height:18px;color:#f26f21">Negative volume</div>
<div class="pl" style="top:226.5px">Cross-section</div>
<div class="fld sel" style="top:223px;width:293px;padding-left:7px;"><span class="t" style="position:static;display:inline-block;transform:scaleX(.89)">7 - RHS100x100</span></div>
<div class="a" style="left:1846px;top:231.5px;width:0;height:0;border:3.5px solid transparent;border-top:5px solid #111"></div>
<div class="a" style="left:1862px;top:223px;width:22px;height:21px;background:#a8a8a8"><svg width="22" height="21"><path d="M5.6 16.2 L6.8 12 L14.6 4.4 L17 6.8 L9.4 14.8 Z" fill="#fff"/></svg></div>
<div class="a" style="left:1887px;top:223px;width:22px;height:21px;background:#a8a8a8"><svg width="22" height="21"><path d="M11 3.5 V17.5 M4 10.5 H18" stroke="#fff" stroke-width="3.4"/></svg></div>
<div class="pl" style="top:250.5px">L1 - Length [mm]</div><div class="fld" style="top:248px">100</div>
<div class="pl" style="top:274.5px">L2 - Length [mm]</div><div class="fld" style="top:272px">100</div>
<div class="pl" style="top:296.5px">Mirror Y</div><div class="ck" style="left:1572px;top:299px"></div>
<div class="pl" style="top:318.5px">Mirror Z</div><div class="ck" style="left:1572px;top:321px"></div>
<div class="pl" style="top:342.5px">Offset ex [mm]</div><div class="fld" style="top:340px">0</div>
<div class="pl" style="top:366.5px">Offset ey [mm]</div><div class="fld" style="top:364px">0</div>
<div class="pl" style="top:390.5px">Offset ez [mm]</div><div class="fld" style="top:388px">0</div>
<div class="a" style="left:1441px;top:422px;width:0;height:0;border:5px solid transparent;border-top:7px solid #f26f21"></div>
<div class="t b" style="left:1468px;top:416px;font-size:14.4px;line-height:18px;height:18px;color:#f26f21">Origin</div>
<div class="pl" style="top:442.5px">Origin</div>
<div class="fld sel" style="top:440px;padding-left:7px">Joint</div>
<div class="a" style="left:1896.5px;top:448.5px;width:0;height:0;border:3.5px solid transparent;border-top:5px solid #111"></div>
<div class="pl" style="top:466.5px">β – Direction [°]</div><div class="fld" style="top:464px">0.0</div>
<div class="pl" style="top:490.5px">γ - Pitch [°]</div><div class="fld" style="top:488px">0.0</div>
<div class="pl" style="top:514.5px">α - Rotation [°]</div><div class="fld" style="top:512px">0.0</div>
<div class="pl" style="top:538.5px">Insert X [mm]</div><div class="fld" style="top:536px">0</div>
<div class="pl" style="top:562.5px">Insert Y [mm]</div><div class="fld" style="top:560px">-40</div>
<div class="pl" style="top:586.5px">Insert Z [mm]</div><div class="fld" style="top:584px">126</div>
<!-- STATUS-CONTENT -->
<div class="t" style="left:85px;top:1058px;font-size:12px;color:#8c8c8c;transform:scaleX(1.02)">Design code:</div>
<div class="t b" style="left:161px;top:1058px;font-size:12px;color:#fff;transform:scaleX(.93)">AISC - LRFD</div>
<div class="t" style="left:247px;top:1058px;font-size:12px;color:#8c8c8c;transform:scaleX(.96)">Analysis:</div>
<div class="t b" style="left:298px;top:1058px;font-size:12px;color:#fff;transform:scaleX(.94)">Stress, strain</div>
<div class="t" style="left:389px;top:1058px;font-size:12px;color:#8c8c8c;transform:scaleX(1.06)">Load effects:</div>
<div class="t b" style="left:466px;top:1058px;font-size:12px;color:#fff;transform:scaleX(.97)">Equilibrium not required</div>
<div class="t" style="left:621px;top:1058px;font-size:12px;color:#8c8c8c;transform:scaleX(1.05)">Units:</div>
<div class="t b" style="left:661px;top:1058px;font-size:12px;color:#fff;transform:scaleX(1.03)">mm</div>
<div class="t" style="left:1797px;top:1058px;font-size:12.4px;color:#fff;transform:scaleX(.97)" id="www"><span style="color:#f26f21">www.</span>ideastatica<span style="color:#f26f21">.com</span></div>
<!-- TASKBAR-CONTENT -->
<div class="a" style="left:0;top:553px;width:62px;height:46px;background:#46463f"></div>
<div id="task2" class="a" style="left:0;top:0;width:62px;height:1080px">
<div class="a" style="left:0;top:134px;width:2px;height:37px;background:#78bbef"></div>
<div class="a" style="left:0;top:181px;width:2px;height:37px;background:#78bbef"></div>
<div class="a" style="left:0;top:228px;width:2px;height:37px;background:#78bbef"></div>
<div class="a" style="left:0;top:275px;width:2px;height:37px;background:#78bbef"></div>
<div class="a" style="left:0;top:322px;width:2px;height:37px;background:#78bbef"></div>
<div class="a" style="left:0;top:369px;width:2px;height:37px;background:#78bbef"></div>
<div class="a" style="left:0;top:416px;width:2px;height:37px;background:#78bbef"></div>
<div class="a" style="left:0;top:463px;width:2px;height:37px;background:#78bbef"></div>
<div class="a" style="left:0;top:510px;width:2px;height:37px;background:#78bbef"></div>
<div class="a" style="left:0;top:553px;width:2px;height:46px;background:#78bbef"></div>
</div>
<svg class="a" style="left:0;top:0" width="62" height="1080" viewBox="0 0 62 1080">
<!-- windows -->
<path d="M23 14.2 L29.6 13.2 V19.6 H23 Z M30.6 13 L39.4 11.8 V19.6 H30.6 Z M23 20.6 H29.6 V27 L23 26 Z M30.6 20.6 H39.4 V28.4 L30.6 27.2 Z" fill="#fff"/>
<!-- search -->
<circle cx="33.6" cy="57.4" r="5.6" fill="none" stroke="#fff" stroke-width="1.5"/><path d="M29.6 61.6 L23.4 67.6" stroke="#fff" stroke-width="1.6"/>
<!-- IDEA icon -->
<g id="ideaic"><rect x="19.2" y="94" width="23.8" height="23.8" rx="2.8" fill="#f26f21"/>
<path d="M24.8 99.4 H41.8 L38.4 111.9 H21.4 Z" fill="none" stroke="#fff" stroke-width=".8"/>
<path d="M27.9 101 L25.4 110.3" stroke="#fff" stroke-width="1.7"/>
<path d="M30.4 101.2 H39.4 L37 110.1 H28 Z" fill="none" stroke="#fff" stroke-width="1.3"/>
<path d="M32.8 103.6 H36.6 L35.4 107.8 H31.6 Z" fill="#fff"/></g>
<use href="#ideaic" y="375.6"/>
<!-- folder -->
<path d="M20.2 145.4 Q20.2 143.8 21.8 143.8 H27.4 L29 145.6 H40.6 Q42.2 145.6 42.2 147.2 V160 Q42.2 161.4 40.6 161.4 H21.8 Q20.2 161.4 20.2 160 Z" fill="#f0c850"/>
<path d="M20.2 146.8 H42.2 V160 Q42.2 161.4 40.6 161.4 H21.8 Q20.2 161.4 20.2 160 Z" fill="#fbe396"/>
<path d="M24.6 154.6 H37.8 V161.4 H34.6 V158 H27.8 V161.4 H24.6 Z" fill="#2f9be6"/>
<!-- floppy -->
<path d="M19.4 190.2 Q19.4 188.6 21 188.6 H40 L42.8 191.4 V210.6 Q42.8 212 41.2 212 H21 Q19.4 212 19.4 210.6 Z" fill="#2236b4"/>
<rect x="25.6" y="188.8" width="10.4" height="7" fill="#d6d8de"/><rect x="32.6" y="190" width="3.4" height="5.2" fill="#2236b4"/>
<rect x="21.6" y="199.2" width="19" height="12.4" fill="#f6f6f8"/><path d="M21.6 202.4 H40.6 M21.6 205.6 H40.6 M21.6 208.8 H40.6" stroke="#e2607a" stroke-width=".9"/><rect x="32.4" y="206.6" width="5.4" height="3.6" fill="#444"/>
<!-- picture/paint -->
<rect x="19.6" y="235.6" width="18.6" height="22.2" fill="#e8e8e8" stroke="#8c8c8c" stroke-width=".7"/>
<rect x="21.2" y="237.2" width="15.4" height="15.4" fill="#2d62c8"/><path d="M21.2 246 Q26 240 30 243 T36.6 241 V252.6 H21.2 Z" fill="#9ec4ee"/><path d="M21.2 248.6 L28 245.4 L36.6 249.6 V252.6 H21.2 Z" fill="#1c3a78"/>
<path d="M27.6 254.4 L41.6 243" stroke="#d8283c" stroke-width="1.8"/><path d="M24 257 L28.6 253.4" stroke="#333" stroke-width="1.8"/>
<!-- outlook -->
<path d="M26.6 284.6 H42 Q43 284.6 43 285.6 V299 H26.6 Z" fill="#1a8ae0"/><path d="M34.6 284.6 H42 Q43 284.6 43 285.6 V291.6 H34.6 Z" fill="#4fc0f6"/><path d="M26.6 291.6 H34.6 V298 H26.6 Z" fill="#0f64b8"/>
<path d="M25.4 296.6 L34.6 302.6 L43 296.8 V303.6 Q43 304.8 41.8 304.8 H26.6 Q25.4 304.8 25.4 303.6 Z" fill="#2aa4ee"/><path d="M43 296.8 L30 304.8 H41.8 Q43 304.8 43 303.6 Z" fill="#1670c4"/>
<rect x="19.4" y="288.6" width="11.6" height="11.6" rx="1.2" fill="#0f6cbd"/><ellipse cx="25.2" cy="294.4" rx="2.7" ry="3.1" fill="none" stroke="#fff" stroke-width="1.5"/>
<!-- opera -->
<ellipse cx="30.8" cy="340.8" rx="11.2" ry="11.2" fill="#e0142c"/><ellipse cx="30.8" cy="340.8" rx="5" ry="8.4" fill="#1a1a17"/><path d="M35 332 Q41 336 40.6 341.6 Q40.2 347 35 349.8 Q38.4 345.6 38.2 340.6 Q38 335.6 35 332 Z" fill="#a00c20"/>
<!-- skype -->
<circle cx="27.2" cy="385" r="6.6" fill="#14a6f0"/><circle cx="33" cy="391.4" r="6.8" fill="#14a6f0"/><circle cx="30.2" cy="388" r="8.6" fill="#14a6f0"/>
<text x="25.6" y="393.6" font-family="Liberation Sans, sans-serif" font-weight="bold" font-size="15" fill="#fff">S</text>
<circle cx="37" cy="394.6" r="6.2" fill="#ea3a3c"/><text x="34.9" y="398" font-family="Liberation Sans, sans-serif" font-size="9" fill="#fff">1</text>
<!-- calculator -->
<rect x="22" y="423" width="18.4" height="23.8" rx="1" fill="#fff"/><rect x="24.6" y="425.6" width="13.2" height="3.4" fill="#1a1a17"/>
<g fill="#1a1a17"><rect x="24.6" y="432" width="2.6" height="2.4"/><rect x="29.9" y="432" width="2.6" height="2.4"/><rect x="35.2" y="432" width="2.6" height="2.4"/><rect x="24.6" y="436.8" width="2.6" height="2.4"/><rect x="29.9" y="436.8" width="2.6" height="2.4"/><rect x="35.2" y="436.8" width="2.6" height="2.4"/><rect x="24.6" y="441.6" width="2.6" height="2.4"/><rect x="29.9" y="441.6" width="2.6" height="2.4"/><rect x="35.2" y="441.6" width="2.6" height="2.4"/></g>
<!-- powerpoint -->
<circle cx="33.6" cy="527.6" r="9.8" fill="#e8694a"/><path d="M33.6 517.8 A9.8 9.8 0 0 1 43.4 527.6 H33.6 Z" fill="#f69a7c"/><path d="M23.8 527.6 H43.4 A9.8 9.8 0 0 1 23.8 527.6 Z" fill="#d04a2a"/>
<rect x="19.2" y="522.6" width="11" height="11" rx="1" fill="#c43e1c"/><text x="21.8" y="531.8" font-family="Liberation Sans, sans-serif" font-weight="bold" font-size="9.6" fill="#fff">P</text>
<!-- active IDEA connection -->
<rect x="19.4" y="564" width="23.6" height="23.6" rx="2.6" fill="#f26f21"/>
<path d="M24.4 570 L31.2 575.6 L38 570" fill="none" stroke="#fff" stroke-width="2.2"/><rect x="23" y="576.6" width="16.4" height="3.8" fill="#fff"/>
<!-- tray -->
<path d="M42 918.6 L47.8 924 L42 929.4" fill="none" stroke="#fff" stroke-width="1.3"/>
<path d="M16.4 952.4 Q12.8 952.4 13 949.4 Q13.2 946.8 16 946.8 Q16.8 943.6 20.2 943.8 Q22.8 944 23.8 946.2 Q26 945.6 27.2 947.4 Q29.4 947.6 29.2 950 Q29 952.4 26.6 952.4 Z" fill="#2a8fe6"/>
<rect x="38.2" y="943.6" width="13.4" height="8.8" rx="1.2" fill="none" stroke="#fff" stroke-width="1.2"/><rect x="40" y="945.4" width="7" height="5.2" fill="#fff"/><rect x="52" y="946.4" width="1.4" height="3.2" fill="#fff"/>
<g fill="none" stroke="#bbb" stroke-width="1"><path d="M16.6 978 A10 10 0 0 1 26.4 968.2"/><path d="M19.4 978 A7.2 7.2 0 0 1 26.4 971"/><path d="M22.2 978 A4.4 4.4 0 0 1 26.4 973.8"/></g><circle cx="25.6" cy="977.2" r="1.3" fill="#fff"/>
<path d="M37.4 969.6 H40 L43.4 966.6 V977.4 L40 974.4 H37.4 Z" fill="none" stroke="#fff" stroke-width="1"/><path d="M45.6 969 Q47.4 972 45.6 975" fill="none" stroke="#fff" stroke-width="1"/><path d="M47.8 967.4 Q50.6 972 47.8 976.6 M50.2 966 Q53.6 972 50.2 978" fill="none" stroke="#888" stroke-width="1"/>
</svg>
<div class="a" style="left:0;top:994.5px;width:62px;text-align:center;color:#fff;font-size:12px;line-height:14px"><span style="display:inline-block;transform:scaleX(.86)">CES</span></div>
<div class="a" style="left:0;top:1032px;width:62px;text-align:center;color:#fff;font-size:12px;line-height:14px"><span style="display:inline-block;transform:scaleX(.94)">01:06 PM</span></div>
<div class="a" style="left:0;top:1048.5px;width:62px;text-align:center;color:#fff;font-size:12px;line-height:14px"><span style="display:inline-block;transform:scaleX(.9)">08/05/2019</span></div>
<div class="a" style="left:0;top:1075px;width:62px;height:1px;background:#8a8a86"></div>
</body>
</html>
